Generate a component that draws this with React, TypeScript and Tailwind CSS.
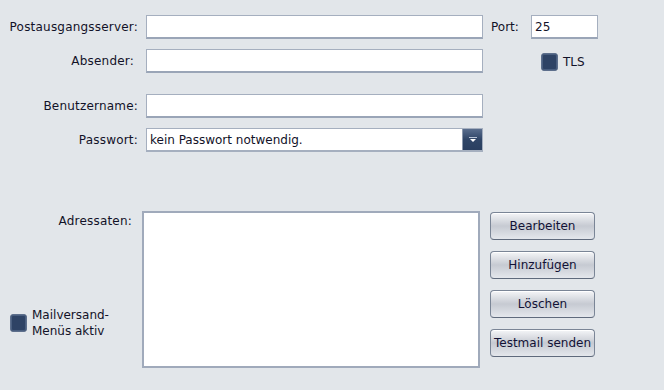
const inputCls =
  "h-[24px] bg-white border border-[#a5afbf] border-b-2 border-b-[#9aa5b7] px-[3px] flex items-center";

const Label = ({ text, w = "w-[138px]" }: { text: string; w?: string }) => (
  <div className={`${w} text-right shrink-0 tracking-[0.2px]`}>{text}</div>
);

const CheckBox = () => (
  <div className="w-[17px] h-[18px] rounded-[3px] border border-[#5d6f8c] bg-[#2e4365] shadow-[inset_0_0_0_1px_#4a5f80] shrink-0" />
);

const SideButton = ({ text }: { text: string }) => (
  <button className="w-[105px] h-[28px] rounded-[4px] border border-[#7a8596] border-b-[#5f6a7c] bg-gradient-to-b from-[#f5f6f8] via-[#c6cad2] to-[#e4e7ec] text-[12px] text-[#121236] shadow-[inset_0_1px_0_#ffffff]">
    {text}
  </button>
);

export default function App() {
  return (
    <div className="w-[664px] h-[390px] bg-[#e2e6ea] pt-[15px] font-['DejaVu_Sans',sans-serif] text-[12px] text-[#121228] overflow-hidden">
      {/* Postausgangsserver + Port */}
      <div className="flex items-center h-[24px]">
        <Label text="Postausgangsserver:" />
        <div className={`${inputCls} ml-[8px] w-[337px]`} />
        <div className="ml-[8px] w-[40px]">Port:</div>
        <div className={`${inputCls} w-[67px]`}>25</div>
      </div>

      {/* Absender + TLS */}
      <div className="flex items-center h-[24px] mt-[10px]">
        <Label text="Absender:" w="w-[134px]" />
        <div className={`${inputCls} ml-[12px] w-[337px]`} />
        <div className="ml-[58px] mt-[2px] flex items-center gap-[5px]">
          <CheckBox />
          <span>TLS</span>
        </div>
      </div>

      {/* Benutzername */}
      <div className="flex items-center h-[24px] mt-[21px]">
        <Label text="Benutzername:" />
        <div className={`${inputCls} ml-[8px] w-[337px]`} />
      </div>

      {/* Passwort */}
      <div className="flex items-center h-[24px] mt-[10px]">
        <Label text="Passwort:" />
        <div className="ml-[8px] w-[337px] h-[24px] bg-white border border-[#a5afbf] border-b-2 flex items-center">
          <div className="flex-1 pl-[3px]">kein Passwort notwendig.</div>
          <div className="w-[20px] h-[21px] bg-gradient-to-b from-[#5a6e8e] via-[#2f4567] to-[#2a3f60] border-l border-[#8a98ad] flex items-center justify-center">
            <svg width="10" height="8" viewBox="0 0 10 8">
              <rect x="1" y="1" width="8" height="1" fill="#b8c4d6" />
              <path d="M2 3 H8 L5 6 Z" fill="#ffffff" />
            </svg>
          </div>
        </div>
      </div>

      {/* Adressaten */}
      <div className="flex mt-[59px]">
        <div className="w-[142px] shrink-0 flex flex-col justify-between h-[157px]">
          <div className="text-right pr-[10px] mt-[1px] tracking-[0.2px]">Adressaten:</div>
          <div className="flex items-center gap-[5px] pl-[10px] mb-[29px]">
            <CheckBox />
            <div className="leading-[16px]">
              Mailversand-
              <br />
              Menüs aktiv
            </div>
          </div>
        </div>
        <div className="w-[338px] h-[157px] bg-white border-2 border-[#a0aabb]" />
        <div className="ml-[10px] mt-[1px] flex flex-col gap-[11px]">
          <SideButton text="Bearbeiten" />
          <SideButton text="Hinzufügen" />
          <SideButton text="Löschen" />
          <SideButton text="Testmail senden" />
        </div>
      </div>
    </div>
  );
}
